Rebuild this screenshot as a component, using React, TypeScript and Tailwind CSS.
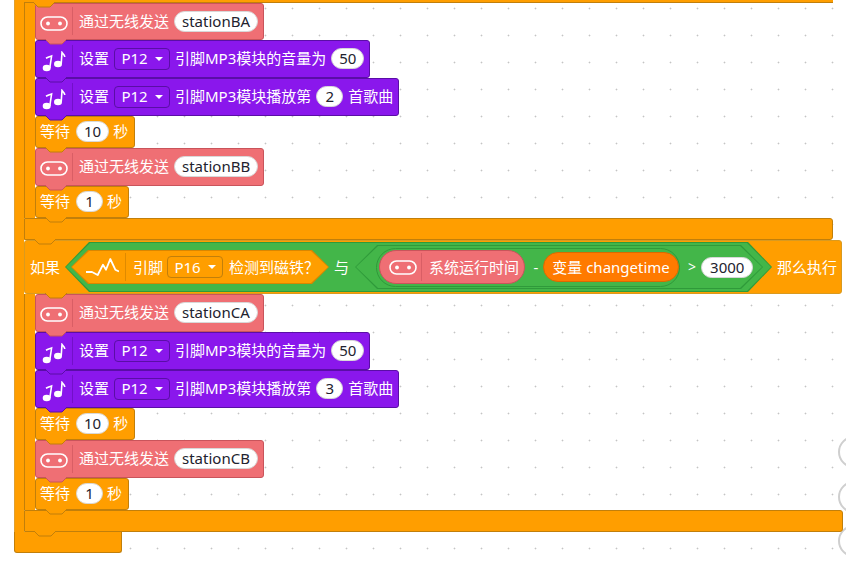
import type { ReactNode } from "react";

const THEMES = {
  coral: { fill: "#EF6F74", line: "#C9545B", bg: "bg-[#EF6F74]", border: "border-[#C9545B]" },
  purple: { fill: "#8A17EC", line: "#5A0EA6", bg: "bg-[#8A17EC]", border: "border-[#5A0EA6]" },
  orange: { fill: "#FF9E00", line: "#C17F0B", bg: "bg-[#FF9E00]", border: "border-[#C17F0B]" },
};

type Tone = keyof typeof THEMES;

function Bump({ tone }: { tone: Tone }) {
  const t = THEMES[tone];
  return (
    <svg width="22" height="6" viewBox="0 0 22 6" className="absolute left-[9px] top-full z-10">
      <path d="M0 0 L5 5 H17 L22 0 Z" fill={t.fill} />
      <path d="M0 0 L5 5 H17 L22 0" fill="none" stroke={t.line} />
    </svg>
  );
}

function Block({
  tone,
  height,
  children,
}: {
  tone: Tone;
  height: string;
  children: ReactNode;
}) {
  const t = THEMES[tone];
  return (
    <div
      className={`relative flex w-fit items-center rounded-[3px] border pb-[1px] ${t.bg} ${t.border} ${height}`}
    >
      {children}
      <Bump tone={tone} />
    </div>
  );
}

function Pill({ children, wide }: { children: ReactNode; wide?: boolean }) {
  return (
    <span
      className={`flex h-[21px] min-w-[27px] items-center justify-center rounded-full border border-[#d8d8d8] bg-white text-[15px] text-[#22222e] ${wide ? "px-[8px]" : "px-[7px]"}`}
    >
      {children}
    </span>
  );
}

function Caret() {
  return <span className="ml-[7px] h-0 w-0 border-x-[4px] border-t-[4px] border-x-transparent border-t-white" />;
}

function Dropdown({ label, tone }: { label: string; tone: Tone }) {
  return (
    <span
      className={`flex h-[22px] w-[56px] items-center justify-center rounded-[4px] border text-[15px] text-white ${THEMES[tone].border}`}
    >
      {label}
      <Caret />
    </span>
  );
}

function BitIcon() {
  return (
    <svg width="28" height="15" viewBox="0 0 28 15" fill="none">
      <rect x="1" y="1" width="26" height="13" rx="6.5" stroke="#fff" strokeWidth="1.6" />
      <circle cx="8" cy="7.5" r="1.9" fill="#fff" />
      <circle cx="20" cy="7.5" r="1.9" fill="#fff" />
    </svg>
  );
}

function NotesIcon() {
  return (
    <svg width="24" height="22" viewBox="0 0 24 22" fill="none" className="mt-[6px]">
      <ellipse cx="4.7" cy="17" rx="4" ry="3.2" fill="#fff" />
      <path d="M7.8 17 L9.6 5 C8 5.5 6 6 4 7.2" stroke="#fff" strokeWidth="1.6" />
      <ellipse cx="16" cy="13" rx="4" ry="3.2" fill="#fff" />
      <path d="M19.2 13 L20 1.5 C21 3 22.6 3.6 22.8 6" stroke="#fff" strokeWidth="1.6" />
    </svg>
  );
}

function PulseIcon() {
  return (
    <svg width="33" height="18" viewBox="0 0 33 18" fill="none">
      <path
        d="M0 14 H6 L11.7 17 L17 6.7 L20 11.7 L24.3 1 L29.3 11.7 L33 13.5"
        stroke="#fff"
        strokeWidth="1.8"
        strokeLinejoin="round"
      />
    </svg>
  );
}

function IconCell({ children, line }: { children: ReactNode; line: string }) {
  return (
    <span className={`flex h-[28px] w-[37px] items-center justify-center border-r ${line}`}>
      {children}
    </span>
  );
}

function Radio({ name, height = "h-[38px]" }: { name: string; height?: string }) {
  return (
    <Block tone="coral" height={height}>
      <IconCell line="border-[#D95E65]">
        <span className="mt-[4px] flex">
          <BitIcon />
        </span>
      </IconCell>
      <span className="ml-[6px] text-[15px] text-white">通过无线发送</span>
      <span className="ml-[5px] mr-[5px]">
        <Pill>{name}</Pill>
      </span>
    </Block>
  );
}

function Mp3({ before, value, after }: { before: string; value: string; after?: string }) {
  return (
    <Block tone="purple" height="h-[38px]">
      <IconCell line="border-[#7210C8]">
        <NotesIcon />
      </IconCell>
      <span className="ml-[6px] text-[15px] text-white">设置</span>
      <span className="ml-[5px]">
        <Dropdown label="P12" tone="purple" />
      </span>
      <span className="ml-[5px] text-[15px] text-white">{before}</span>
      <span className="ml-[5px]">
        <Pill>{value}</Pill>
      </span>
      {after && <span className="ml-[5px] text-[15px] text-white">{after}</span>}
      <span className="w-[5px]" />
    </Block>
  );
}

function Wait({ seconds }: { seconds: string }) {
  return (
    <Block tone="orange" height="h-[32px]">
      <span className="ml-[4px] text-[15px] text-white">等待</span>
      <span className="ml-[6px]">
        <Pill>{seconds}</Pill>
      </span>
      <span className="ml-[4px] mr-[6px] text-[15px] text-white">秒</span>
    </Block>
  );
}

function Station({
  first,
  second,
  sound,
  firstHeight,
}: {
  first: string;
  second: string;
  sound: string;
  firstHeight: string;
}) {
  return (
    <div className="flex">
      <div className="w-[11px] shrink-0 border-l border-[#C17F0B] bg-[#FF9E00]" />
      <div className="flex flex-col">
        <Radio name={first} height={firstHeight} />
        <Mp3 before="引脚MP3模块的音量为" value="50" />
        <Mp3 before="引脚MP3模块播放第" value={sound} after="首歌曲" />
        <Wait seconds="10" />
        <Radio name={second} />
        <Wait seconds="1" />
      </div>
    </div>
  );
}

function CondHeader() {
  return (
    <div className="relative flex h-[54px] w-[818px] items-center rounded-[3px] border border-[#D99A20] bg-[#FF9E00] text-[15px] text-white">
      <span className="ml-[5px]">如果</span>
      {/* and-block */}
      <div className="relative ml-[5px] flex h-[50px] w-[707px] items-center pl-[6px]">
        <div className="absolute inset-0 bg-[#2F9A3A] [clip-path:polygon(24px_0,calc(100%-24px)_0,100%_50%,calc(100%-24px)_100%,24px_100%,0_50%)]" />
        <div className="absolute inset-[1px] bg-[#43B649] [clip-path:polygon(24px_0,calc(100%-24px)_0,100%_50%,calc(100%-24px)_100%,24px_100%,0_50%)]" />
        {/* magnet sensor */}
        <div className="relative flex h-[34px] w-[258px] items-center pl-[15px]">
          <div className="absolute inset-0 bg-[#D98600] [clip-path:polygon(17px_0,calc(100%-17px)_0,100%_50%,calc(100%-17px)_100%,17px_100%,0_50%)]" />
          <div className="absolute inset-[1px] bg-[#FF9E00] [clip-path:polygon(17px_0,calc(100%-17px)_0,100%_50%,calc(100%-17px)_100%,17px_100%,0_50%)]" />
          <span className="relative flex items-center">
            <span className="flex h-[28px] w-[40px] items-center border-r border-[#DE8A00]">
              <PulseIcon />
            </span>
            <span className="ml-[7px]">引脚</span>
            <span className="ml-[4px]">
              <Dropdown label="P16" tone="orange" />
            </span>
            <span className="ml-[6px]">检测到磁铁？</span>
          </span>
        </div>
        <span className="relative ml-[5px]">与</span>
        {/* comparison */}
        <div className="relative ml-[6px] flex h-[44px] w-[408px] items-center pl-[21px]">
          <div className="absolute inset-0 bg-[#2F9A3A] [clip-path:polygon(22px_0,calc(100%-22px)_0,100%_50%,calc(100%-22px)_100%,22px_100%,0_50%)]" />
          <div className="absolute inset-[1px] bg-[#43B649] [clip-path:polygon(22px_0,calc(100%-22px)_0,100%_50%,calc(100%-22px)_100%,22px_100%,0_50%)]" />
          <div className="relative flex items-center">
            <div className="flex h-[39px] w-[304px] items-center rounded-full border border-[#2F9A3A] pl-[2px]">
              <span className="flex h-[34px] w-[146px] items-center rounded-full border border-[#C9545B] bg-[#EF6F74]">
                <span className="flex h-[28px] w-[42px] items-center justify-end border-r border-[#D95E65] pr-[4px]">
                  <BitIcon />
                </span>
                <span className="ml-[7px]">系统运行时间</span>
              </span>
              <span className="ml-[4px] w-[14px] text-center">-</span>
              <span className="flex h-[30px] w-[136px] items-center justify-center rounded-full border border-[#D96A00] bg-[#FF7A00]">
                变量 changetime
              </span>
            </div>
            <span className="ml-[8px] text-[14px]">&gt;</span>
            <span className="ml-[5px]">
              <Pill wide>3000</Pill>
            </span>
          </div>
        </div>
      </div>
      <span className="ml-[5px]">那么执行</span>
      <svg width="22" height="6" viewBox="0 0 22 6" className="absolute left-[20px] top-full z-10">
        <path d="M0 0 L5 5 H17 L22 0 Z" fill="#FF9E00" />
        <path d="M0 0 L5 5 H17 L22 0" fill="none" stroke="#C17F0B" />
      </svg>
    </div>
  );
}

export default function App() {
  return (
    <div className="relative h-[565px] w-[846px] overflow-hidden bg-white bg-[radial-gradient(circle_at_22.5px_8.5px,#c4c4c4_0.8px,transparent_1.1px)] bg-[length:27px_27px] font-['Noto_Sans','Noto_Sans_CJK_SC',sans-serif] leading-none">
      {/* zoom controls, cut off by the right edge */}
      <span className="absolute left-[838px] top-[436px] h-[32px] w-[32px] rounded-full border-2 border-[#cfcfcf] bg-white" />
      <span className="absolute left-[838px] top-[481px] h-[32px] w-[32px] rounded-full border-2 border-[#cfcfcf] bg-white" />
      <span className="absolute left-[838px] top-[525px] h-[32px] w-[32px] rounded-full border-2 border-[#cfcfcf] bg-white" />

      <div className="relative flex pl-[14px]">
        <div className="w-[10px] shrink-0 border-l border-[#E0A030] bg-[#FF9E00]" />
        <div className="flex flex-col">
          <div className="relative h-[3px] w-[809px] border-b border-[#C17F0B] bg-[#FF9E00]">
            <Bump tone="orange" />
          </div>
          <Station first="stationBA" second="stationBB" sound="2" firstHeight="h-[37px]" />
          <div className="relative h-[22px] w-[809px] rounded-r-[3px] border border-[#C17F0B] bg-[#FF9E00]">
            <Bump tone="orange" />
          </div>
          <CondHeader />
          <Station first="stationCA" second="stationCB" sound="3" firstHeight="h-[38px]" />
          <div className="relative h-[22px] w-[819px] rounded-r-[3px] border border-[#C17F0B] bg-[#FF9E00]">
            <Bump tone="orange" />
          </div>
        </div>
      </div>
      <div className="relative ml-[14px] h-[21px] w-[108px] rounded-b-[3px] border-x border-b border-[#C17F0B] bg-[#FF9E00]" />
    </div>
  );
}
